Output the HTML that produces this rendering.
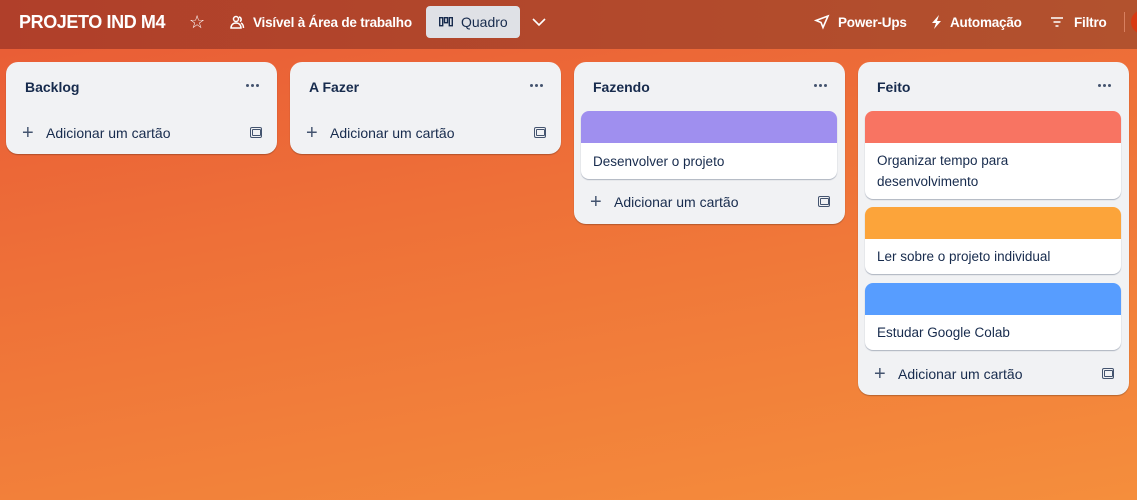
<!DOCTYPE html>
<html><head><meta charset="utf-8"><style>
*{box-sizing:border-box;margin:0;padding:0}
body{width:1137px;height:500px;overflow:hidden;font-family:"Liberation Sans",sans-serif;background:linear-gradient(170deg,#e85a36 0%,#ee7038 40%,#f58e3c 100%);position:relative;color:#172b4d}
.hdr{position:absolute;left:0;top:0;width:1137px;height:49px;background:linear-gradient(90deg,#b03f2a,#b24a2c 60%,#b2522e);color:#fff;font-size:13.5px}
.hdr .it{position:absolute;top:0;height:44px;display:flex;align-items:center;gap:6px;font-weight:bold;letter-spacing:-0.2px}
.quad{position:absolute;left:426px;top:6px;width:94px;height:32px;background:#dfe1e6;border-radius:4px;color:#172b4d;font-weight:normal;display:flex;align-items:center;padding-left:13px;gap:8px;font-size:14px}
.list{position:absolute;width:271px;background:#f1f2f4;border-radius:12px;box-shadow:0 1px 1px rgba(0,0,0,.25)}
.ttl{position:absolute;left:19px;top:17px;font-weight:bold;font-size:14px}
.dots{position:absolute;right:18px;top:22px;display:flex;gap:2px}
.dots i{width:3px;height:3px;border-radius:50%;background:#44546f}
.add{position:absolute;left:16px;height:20px;display:flex;align-items:center;font-size:14px;color:#44546f}
.add b{font-weight:normal;font-size:20px;width:22px;color:#44546f;margin-right:2px}
.add span{color:#172b4d}
.tpl{position:absolute;right:15px;width:12px;height:11px;border:1.6px solid #44546f;border-radius:2px}
.tpl:after{content:"";position:absolute;left:1px;top:1px;width:7px;height:5px;border:1.3px solid #44546f;border-radius:1px}
.card{position:absolute;left:7px;width:256px;background:#fff;border-radius:8px;box-shadow:0 1px 1px rgba(9,30,66,.3);overflow:hidden;font-size:13.5px}
.cov{height:32px}
.ct{padding:10px 12px 0;line-height:21px}
</style></head><body>
<div class="hdr">
<div class="it" style="left:19px;font-size:18px;letter-spacing:-0.4px">PROJETO IND M4</div>
<div class="it" style="left:189px;font-size:18px;font-weight:normal">☆</div>
<div class="it" style="left:229px"><svg width="16" height="16" viewBox="0 0 16 16" fill="none" stroke="#fff" stroke-width="1.5"><circle cx="7" cy="5" r="2.5"/><path d="M2 14c0-3 2-5 5-5s5 2 5 5z"/><path d="M10 3a2.5 2.5 0 0 1 1 4.6M12 9c1.5.8 2.5 2.5 2.5 5"/></svg><span style="margin-left:2px">Visível à Área de trabalho</span></div>
<div class="quad"><svg width="14" height="10" viewBox="0 0 14 10"><rect x="0.7" y="0.7" width="3" height="8" fill="none" stroke="#172b4d" stroke-width="1.4"/><rect x="5.5" y="0.7" width="3" height="5" fill="none" stroke="#172b4d" stroke-width="1.4"/><rect x="10.3" y="0.7" width="3" height="8" fill="none" stroke="#172b4d" stroke-width="1.4"/></svg>Quadro</div>
<div class="it" style="left:531px"><svg width="16" height="16" viewBox="0 0 16 16"><path d="M2 5l6 6 6-6" fill="none" stroke="#fff" stroke-width="1.6"/></svg></div>
<div class="it" style="left:814px"><svg width="16" height="16" viewBox="0 0 16 16" fill="none" stroke="#fff" stroke-width="1.6"><path d="M14 2L2 6.5l5 2 2 5z"/></svg><span style="margin-left:2px">Power-Ups</span></div>
<div class="it" style="left:931px"><svg width="12" height="16" viewBox="0 0 12 16"><path d="M8 1L1 9h4l-2 6 7-8H6z" fill="#fff"/></svg><span style="margin-left:1px">Automação</span></div>
<div class="it" style="left:1050px"><svg width="14" height="14" viewBox="0 0 14 14" stroke="#fff" stroke-width="1.6"><path d="M1 3h12M3.5 7h7M5.5 11h3"/></svg><span style="margin-left:4px">Filtro</span></div>
<div style="position:absolute;left:1124px;top:12px;width:1px;height:20px;background:#d88060"></div>
<div style="position:absolute;left:1131px;top:10px;width:24px;height:24px;border-radius:50%;background:#d83a12"></div>
</div>

<div class="list" style="left:6px;top:62px;height:92px"><div class="ttl">Backlog</div><div class="dots"><i></i><i></i><i></i></div>
<div class="add" style="top:61px"><b>+</b><span>Adicionar um cartão</span></div><div class="tpl" style="top:65px"></div></div>

<div class="list" style="left:290px;top:62px;height:92px"><div class="ttl">A Fazer</div><div class="dots"><i></i><i></i><i></i></div>
<div class="add" style="top:61px"><b>+</b><span>Adicionar um cartão</span></div><div class="tpl" style="top:65px"></div></div>

<div class="list" style="left:574px;top:62px;height:162px"><div class="ttl">Fazendo</div><div class="dots"><i></i><i></i><i></i></div>
<div class="card" style="top:49px;height:68px"><div class="cov" style="background:#9f8fef"></div><div class="ct" style="padding-top:8px">Desenvolver o projeto</div></div>
<div class="add" style="top:130px"><b>+</b><span>Adicionar um cartão</span></div><div class="tpl" style="top:134px"></div></div>

<div class="list" style="left:858px;top:62px;height:333px"><div class="ttl">Feito</div><div class="dots"><i></i><i></i><i></i></div>
<div class="card" style="top:49px;height:88px"><div class="cov" style="background:#f87462"></div><div class="ct" style="padding-top:7px">Organizar tempo para desenvolvimento</div></div>
<div class="card" style="top:145px;height:67px"><div class="cov" style="background:#fca43a"></div><div class="ct" style="padding-top:7px">Ler sobre o projeto individual</div></div>
<div class="card" style="top:221px;height:67px"><div class="cov" style="background:#579dff"></div><div class="ct" style="padding-top:7px">Estudar Google Colab</div></div>
<div class="add" style="top:302px"><b>+</b><span>Adicionar um cartão</span></div><div class="tpl" style="top:306px"></div></div>
</body></html>
